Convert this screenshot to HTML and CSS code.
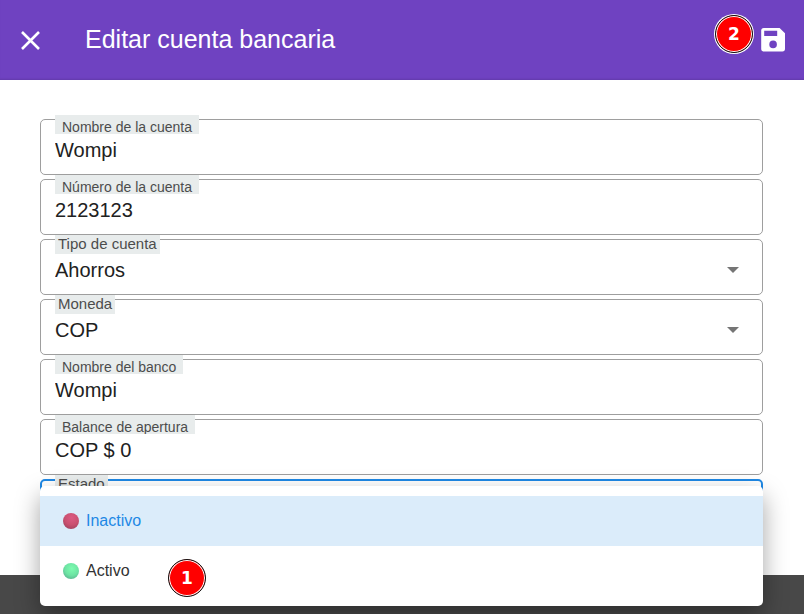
FILE: index.html
```html
<!DOCTYPE html>
<html lang="es">
<head>
<meta charset="utf-8">
<meta name="viewport" content="width=device-width, initial-scale=1">
<title>Editar cuenta bancaria</title>
<link rel="stylesheet" href="styles.css">
</head>
<body>
<main class="dialog">
  <header class="toolbar">
    <button class="icon-button" type="button" aria-label="Cerrar">
      <svg width="20" height="20" viewBox="0 0 20 20" fill="none" stroke="currentColor" stroke-width="2.6"><path d="M2 2l17 17M19 2l-17 17"/></svg>
    </button>
    <h1 class="title">Editar cuenta bancaria</h1>
    <button class="icon-button save" type="button" aria-label="Guardar">
      <svg width="24" height="24" viewBox="0 0 24 24" fill="currentColor" fill-rule="evenodd"><path d="M2.8 0H18.6L24 5.2V20.8a2.6 2.6 0 0 1-2.6 2.6H2.8A2.6 2.6 0 0 1 .2 20.8V2.6A2.6 2.6 0 0 1 2.8 0zM3.2 2.8v5.1h13V2.8zM12.1 12.6a3.8 3.8 0 1 0 0 7.6a3.8 3.8 0 0 0 0-7.6z"/></svg>
      <span class="badge badge-save">2</span>
    </button>
  </header>
  <form class="form">
    <div class="field">
      <label class="label" for="name">Nombre de la cuenta</label>
      <input class="control" id="name" type="text" value="Wompi">
    </div>
    <div class="field">
      <label class="label" for="number">Número de la cuenta</label>
      <input class="control" id="number" type="text" value="2123123">
    </div>
    <div class="field">
      <label class="label label-select" for="type">Tipo de cuenta</label>
      <select class="control" id="type"><option>Ahorros</option></select>
      <svg class="arrow" width="12" height="6" viewBox="0 0 12 6"><path d="M0 0h12L6 6z" fill="currentColor"/></svg>
    </div>
    <div class="field">
      <label class="label label-select" for="currency">Moneda</label>
      <select class="control" id="currency"><option>COP</option></select>
      <svg class="arrow" width="12" height="6" viewBox="0 0 12 6"><path d="M0 0h12L6 6z" fill="currentColor"/></svg>
    </div>
    <div class="field">
      <label class="label" for="bank">Nombre del banco</label>
      <input class="control" id="bank" type="text" value="Wompi">
    </div>
    <div class="field">
      <label class="label" for="balance">Balance de apertura</label>
      <input class="control" id="balance" type="text" value="COP $ 0">
    </div>
    <div class="field field-active">
      <span class="label label-select" id="state-label">Estado</span>
      <div class="menu" role="listbox" aria-labelledby="state-label">
        <button class="option option-selected" type="button" role="option" aria-selected="true"><span class="dot dot-red"></span>Inactivo</button>
        <button class="option" type="button" role="option" aria-selected="false"><span class="dot dot-green"></span>Activo</button>
        <span class="badge badge-menu">1</span>
      </div>
    </div>
  </form>
</main>
</body>
</html>
```
FILE: styles.css
```css
* {
  box-sizing: border-box;
}

body {
  margin: 0;
  min-height: 100vh;
  overflow: hidden;
  background: #484848;
  color: #212121;
  font-family: "Liberation Sans", Arial, sans-serif;
}

.dialog {
  background: #fff;
}

.toolbar {
  display: flex;
  align-items: center;
  height: 80px;
  padding: 0 19px 0 20px;
  background: #6f42c1;
  box-shadow: inset 0 -2px 2px -1px rgba(0, 0, 0, 0.12);
  color: #fff;
}

.title {
  flex: 1;
  margin: 0 0 0 45px;
  padding-bottom: 2px;
  font-size: 25px;
  font-weight: 400;
  line-height: 32px;
}

.icon-button {
  position: relative;
  display: flex;
  padding: 0;
  border: 0;
  background: none;
  color: inherit;
}

.form {
  display: flex;
  flex-direction: column;
  gap: 4px;
  padding: 39px 41px 40px 40px;
}

.field {
  position: relative;
  height: 56px;
  border: 1px solid #9e9e9e;
  border-radius: 5px;
}

.field-active {
  border: 2px solid #1e88e5;
}

.label {
  position: absolute;
  top: -5px;
  left: 14px;
  height: 19px;
  padding: 0 7px;
  background: #e8ecec;
  color: #4c4c4c;
  font-size: 14px;
  line-height: 24px;
  overflow: hidden;
  white-space: nowrap;
}

.label-select {
  padding: 0 3px;
  font-size: 15px;
  line-height: 17px;
}

.field-active .label {
  top: -6px;
  left: 13px;
}

.control {
  display: block;
  width: 100%;
  height: 100%;
  padding: 6px 14px 0;
  border: 0;
  outline: 0;
  appearance: none;
  background: transparent;
  color: inherit;
  font: 20px/24px "Liberation Sans", Arial, sans-serif;
}

.arrow {
  position: absolute;
  top: 27px;
  right: 23px;
  color: #757575;
  pointer-events: none;
}

.menu {
  position: absolute;
  top: 5px;
  left: -2px;
  right: -2px;
  padding: 10px 0;
  border-radius: 5px;
  background: #fff;
  box-shadow: 0 10px 24px rgba(0, 0, 0, 0.36);
}

.option {
  display: flex;
  align-items: center;
  gap: 7px;
  width: 100%;
  height: 50px;
  padding: 0 23px;
  border: 0;
  background: #fff;
  color: #333;
  font: 16px/26px "Liberation Sans", Arial, sans-serif;
}

.option-selected {
  background: #dbecfa;
  color: #1e88e5;
}

.dot {
  width: 16px;
  height: 16px;
  border-radius: 50%;
}

.dot-red {
  background: radial-gradient(circle at 55% 30%, #dc5a82, #c9506f 50%, #8e3d58);
}

.dot-green {
  background: radial-gradient(circle at 55% 35%, #7dfcb0, #6de3a3 50%, #509c86);
}

.badge {
  position: absolute;
  width: 38px;
  height: 38px;
  border: 1px solid #111;
  border-radius: 50%;
  background: #f00;
  box-shadow: inset 0 0 0 1px #fff;
  color: #fff;
  font: bold 17px/36px "DejaVu Sans", sans-serif;
  text-align: center;
}

.badge-save {
  top: -13px;
  right: 32px;
  box-shadow: inset 0 0 0 1px #fff, 0 0 0 1px #fff;
}

.badge-menu {
  top: 73px;
  left: 128px;
}
```
